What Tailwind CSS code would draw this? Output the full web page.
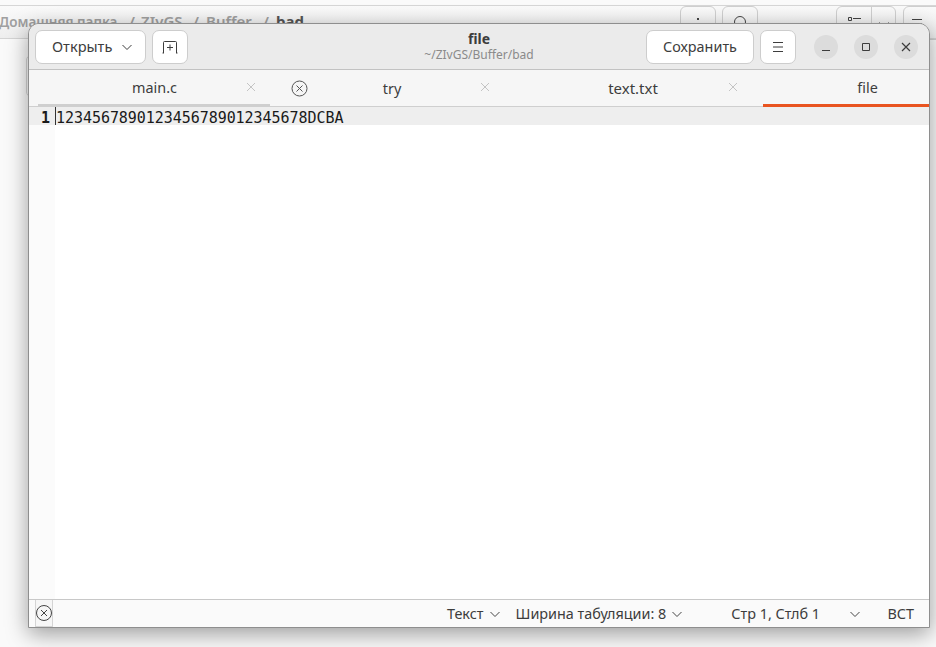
<!DOCTYPE html>
<html lang="ru">
<head>
    <meta charset="UTF-8">
    <title>file - gedit</title>
    <script src="https://cdn.jsdelivr.net/npm/@tailwindcss/browser@4"></script>
</head>
<body class="bg-[#fafafa] font-['Noto_Sans',sans-serif] overflow-hidden">
<div class="relative w-[936px] h-[647px] overflow-hidden">

    <!-- File manager window behind -->
    <div class="absolute left-0 top-0 w-[936px] h-[100px]">
        <div class="h-[5px] bg-[#fafafa] border-b border-[#d6d6d6] box-content"></div>
        <div class="h-[32px] bg-gradient-to-b from-[#fafafa] to-[#eeeeee] border-b border-[#d4d4d4] box-content flex items-start relative">
            <div class="ml-[-1px] mt-[5px] flex items-baseline text-[15px] leading-[20px] text-[#a0a0a0] font-semibold whitespace-nowrap">
                <span class="w-[130px] text-[13.5px]">Домашняя папка</span>
                <span class="w-[12px]">/</span>
                <span class="w-[52px]">ZIvGS</span>
                <span class="w-[13px]">/</span>
                <span class="w-[57px]">Buffer</span>
                <span class="w-[13px]">/</span>
                <span class="text-[#555] font-bold">bad</span>
            </div>
            <div class="absolute left-[680px] top-0 w-[36px] h-[34px] border border-[#cfcfcf] rounded-t-md flex justify-center pt-[10px]">
                <svg class="w-[4px] h-[12px]" viewBox="0 0 4 12" fill="#444"><rect x="1" y="1" width="2" height="2"/><rect x="1" y="6" width="2" height="2"/></svg>
            </div>
            <div class="absolute left-[722px] top-0 w-[36px] h-[34px] border border-[#cfcfcf] rounded-t-md flex justify-center pt-[9px]">
                <svg class="w-[14px] h-[14px]" viewBox="0 0 14 14" fill="none" stroke="#444"><circle cx="7" cy="6" r="5.5"/></svg>
            </div>
            <div class="absolute left-[836px] top-0 w-[60px] h-[34px] border border-[#cfcfcf] rounded-t-md flex">
                <div class="w-[35px] border-r border-[#cfcfcf] flex justify-center pt-[10px]">
                    <svg class="w-[13px] h-[12px]" viewBox="0 0 13 12" fill="none" stroke="#444"><path d="M0.5 0.5h3v3h-3zM0.5 6.5h3v3h-3zM5 1.5h8M5 8h8"/></svg>
                </div>
                <div class="flex-1 flex justify-center pt-[15px]">
                    <svg class="w-[10px] h-[6px]" viewBox="0 0 10 6" fill="none" stroke="#444"><path d="M0.5 0.5l4.5 4.5 4.5-4.5"/></svg>
                </div>
            </div>
            <div class="absolute left-[903px] top-0 w-[40px] h-[34px] border border-[#cfcfcf] rounded-t-md pl-[7px] pt-[11px]">
                <svg class="w-[12px] h-[12px]" viewBox="0 0 12 12" fill="none" stroke="#444"><path d="M1 1.5h10M1 6h10"/></svg>
            </div>
        </div>
        <div class="absolute left-[26px] top-[55px] w-[10px] h-[42px] border border-[#d4d4d4] rounded-md"></div>
    </div>

    <!-- gedit window -->
    <div class="absolute left-[28px] top-[23px] w-[902px] h-[605px] flex flex-col rounded-t-[11px] border border-[#8e8e8e] bg-white shadow-[0_6px_22px_rgba(0,0,0,0.38)]">
        <!-- Header bar -->
        <header class="h-[46px] shrink-0 bg-[#ebebeb] border-b border-[#c2c2c2] rounded-t-[10px] flex items-center pl-[6px] pr-[11px] relative">
            <button class="w-[111px] h-[34px] bg-white border border-[#cdcdcd] rounded-[7px] flex items-center pl-[16px] text-[14.6px] text-[#3d3d3d]">
                Открыть
                <svg class="w-[12px] h-[12px] ml-[9px]" viewBox="0 0 12 12" fill="none" stroke="#3d3d3d" stroke-width="1"><path d="M1.5 4l4.5 4.5L10.5 4"/></svg>
            </button>
            <button class="w-[36px] h-[34px] ml-[6px] bg-white border border-[#cdcdcd] rounded-[7px] flex items-center justify-center">
                <svg class="w-[16px] h-[16px]" viewBox="0 0 16 16" fill="none" stroke="#3d3d3d" stroke-width="1"><path d="M1.5 14V3.5a1 1 0 0 1 1-1h11a1 1 0 0 1 1 1V14M0.5 14h1.5M14 14h1.5M8 5.5v6M5 8.5h6"/></svg>
            </button>
            <div class="absolute left-0 right-0 top-[7px] text-center pointer-events-none">
                <div class="text-[14px] leading-[16px] font-bold text-[#3d3d3d]">file</div>
                <div class="text-[12px] leading-[16px] text-[#8a8a8a]">~/ZIvGS/Buffer/bad</div>
            </div>
            <button class="ml-auto w-[108px] h-[34px] bg-white border border-[#cdcdcd] rounded-[7px] text-[14.4px] text-[#3d3d3d]">Сохранить</button>
            <button class="w-[36px] h-[34px] ml-[6px] bg-white border border-[#cdcdcd] rounded-[7px] flex items-center justify-center">
                <svg class="w-[12px] h-[12px]" viewBox="0 0 12 12" fill="none" stroke="#3d3d3d" stroke-width="1"><path d="M1 1.5h10M1 6h10M1 10.5h10"/></svg>
            </button>
            <div class="w-[24px] h-[24px] ml-[18px] rounded-full bg-[#dcdcdc] flex items-center justify-center">
                <svg class="w-[10px] h-[10px]" viewBox="0 0 10 10" fill="none" stroke="#3d3d3d" stroke-width="1"><path d="M1 8.5h8"/></svg>
            </div>
            <div class="w-[24px] h-[24px] ml-[16px] rounded-full bg-[#dcdcdc] flex items-center justify-center">
                <svg class="w-[10px] h-[10px]" viewBox="0 0 10 10" fill="none" stroke="#3d3d3d" stroke-width="1"><path d="M1.5 1.5h7v7h-7z"/></svg>
            </div>
            <div class="w-[24px] h-[24px] ml-[16px] rounded-full bg-[#dcdcdc] flex items-center justify-center">
                <svg class="w-[10px] h-[10px]" viewBox="0 0 10 10" fill="none" stroke="#3d3d3d" stroke-width="1.2"><path d="M1 1l8 8M9 1l-8 8"/></svg>
            </div>
        </header>

        <!-- Tabs -->
        <div class="h-[37px] shrink-0 bg-[#f6f6f6] border-b border-[#cfcfcf] flex text-[14.4px] text-[#3d3d3d]">
            <div class="w-[9px]"></div>
            <div class="w-[232px] relative flex items-center justify-center border-b-[3px] border-[#cfcfcf] h-[37px] pt-[2px]">
                <span class="ml-[1px]">main.c</span>
                <svg class="absolute left-[208px] top-[12px] w-[10px] h-[10px]" viewBox="0 0 10 10" fill="none" stroke="#c4c4c4" stroke-width="1"><path d="M1 1l8 8M9 1l-8 8"/></svg>
            </div>
            <div class="w-[247px] relative flex items-center justify-center h-[37px]">
                <svg class="absolute left-[21px] top-[10px] w-[17px] h-[17px]" viewBox="0 0 17 17" fill="none" stroke="#555" stroke-width="1"><circle cx="8.5" cy="8.5" r="7.5"/><path d="M5.5 5.5l6 6M11.5 5.5l-6 6"/></svg>
                <span class="mr-[3px]">try</span>
                <svg class="absolute left-[210px] top-[12px] w-[10px] h-[10px]" viewBox="0 0 10 10" fill="none" stroke="#c4c4c4" stroke-width="1"><path d="M1 1l8 8M9 1l-8 8"/></svg>
            </div>
            <div class="w-[246px] relative flex items-center justify-center h-[37px]">
                <span class="mr-[14px] text-[15px]">text.txt</span>
                <svg class="absolute left-[211px] top-[12px] w-[10px] h-[10px]" viewBox="0 0 10 10" fill="none" stroke="#c4c4c4" stroke-width="1"><path d="M1 1l8 8M9 1l-8 8"/></svg>
            </div>
            <div class="flex-1 flex items-center justify-center border-b-[3px] border-[#e95420] h-[37px] pt-[2px]">
                <span class="ml-[43px]">file</span>
            </div>
        </div>

        <!-- Editor -->
        <main class="flex-1 flex min-h-0 bg-white">
            <div class="w-[26px] shrink-0 bg-[#fbfbfb]">
                <div class="h-[18px] bg-[#eeeeee] text-right pr-[5px] font-['DejaVu_Sans_Mono',monospace] text-[15px] leading-[22px] font-bold text-[#1a1a1a]">1</div>
            </div>
            <div class="flex-1">
                <div class="h-[18px] bg-[#eeeeee] font-['DejaVu_Sans_Mono',monospace] text-[15px] leading-[22px] tracking-[-0.05px] text-[#1a1a1a] border-l border-[#333] whitespace-pre">1234567890123456789012345678DCBA</div>
            </div>
        </main>

        <!-- Status bar -->
        <footer class="h-[28px] shrink-0 bg-[#fafafa] border-t border-[#c8c8c8] flex items-center text-[14.4px] text-[#3d3d3d] relative">
            <div class="ml-[6px] w-[18px] h-[27px] border-x border-b border-[#d4d4d4] bg-[#f6f6f6] flex items-center justify-center shrink-0">
                <svg class="w-[16px] h-[16px] shrink-0" viewBox="0 0 16 16" fill="none" stroke="#444" stroke-width="1"><circle cx="8" cy="8" r="7.5"/><path d="M5 5l6 6M11 5l-6 6"/></svg>
            </div>
            <span class="ml-[394px]">Текст</span>
            <svg class="w-[10px] h-[10px] ml-[6px]" viewBox="0 0 10 10" fill="none" stroke="#444" stroke-width="1"><path d="M0.5 3l4.5 4.5L9.5 3"/></svg>
            <span class="ml-[16px]">Ширина табуляции: 8</span>
            <svg class="w-[10px] h-[10px] ml-[6px]" viewBox="0 0 10 10" fill="none" stroke="#444" stroke-width="1"><path d="M0.5 3l4.5 4.5L9.5 3"/></svg>
            <span class="ml-[49px]">Стр 1, Стлб 1</span>
            <svg class="w-[10px] h-[10px] ml-[30px]" viewBox="0 0 10 10" fill="none" stroke="#444" stroke-width="1"><path d="M0.5 3l4.5 4.5L9.5 3"/></svg>
            <span class="ml-auto mr-[15px]">ВСТ</span>
        </footer>
    </div>
</div>
</body>
</html>
